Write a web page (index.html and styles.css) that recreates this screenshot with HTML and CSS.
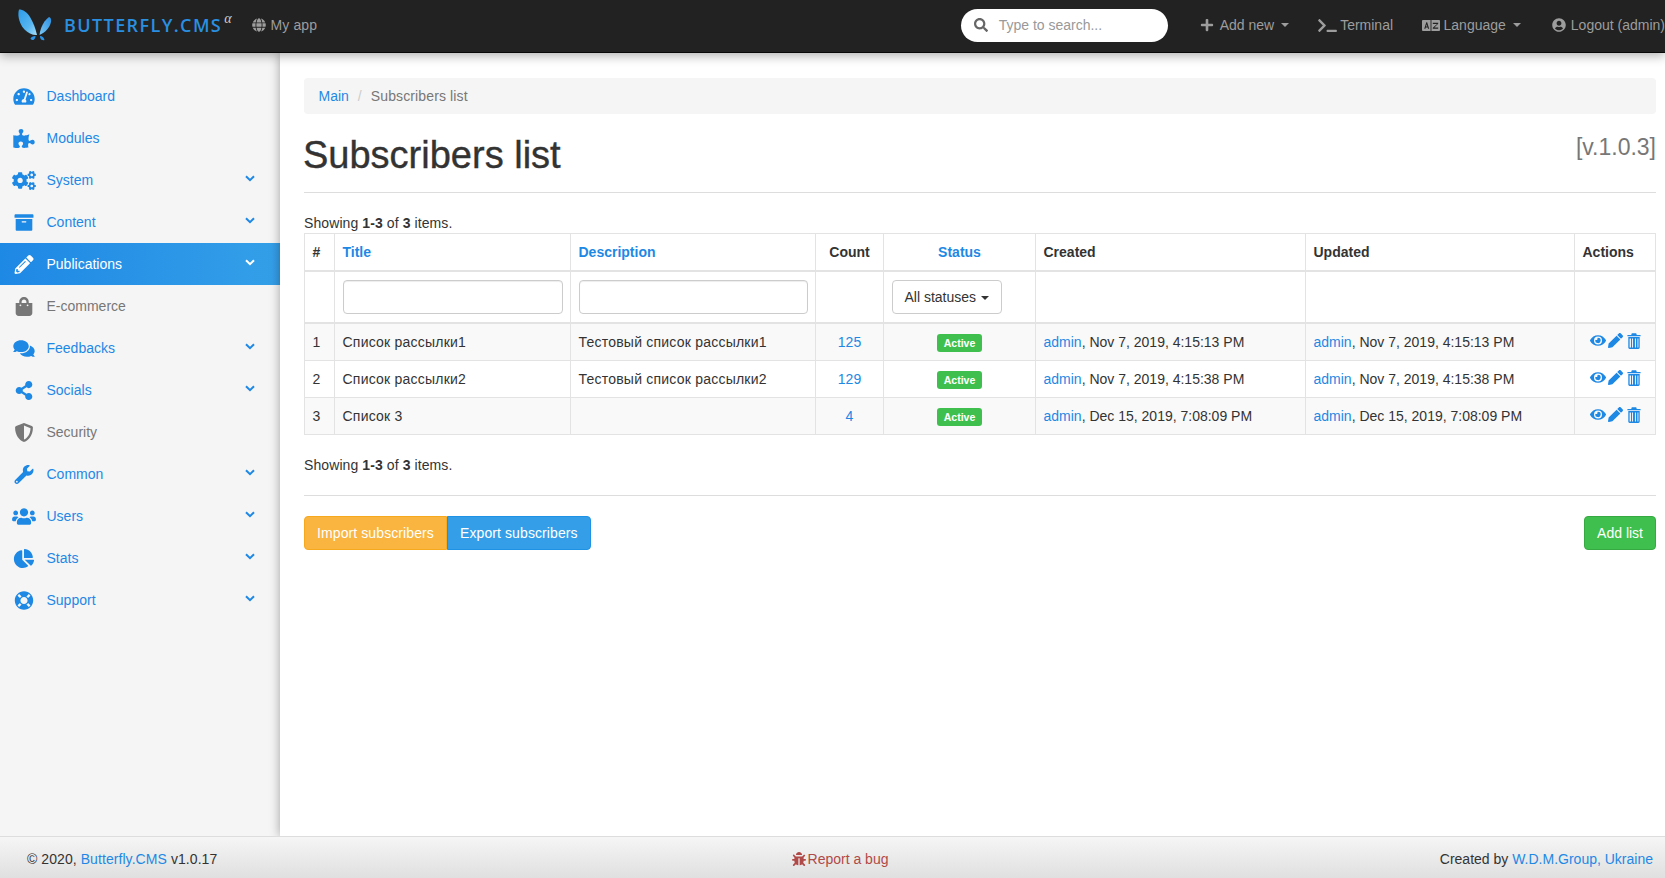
FILE: index.html
```html
<!DOCTYPE html>
<html lang="en">
<head>
<meta charset="utf-8">
<title>Subscribers list</title>
<link rel="stylesheet" href="styles.css">
</head>
<body>
<svg class="sprite" aria-hidden="true">
  <defs>
    <linearGradient id="wingL" x1="0" y1="0" x2="1" y2="1"><stop offset="0" stop-color="#2d9be8"/><stop offset=".6" stop-color="#55b5f0"/><stop offset="1" stop-color="#a5dcf8"/></linearGradient>
    <linearGradient id="wingR" x1="1" y1="0" x2="0" y2="1"><stop offset="0" stop-color="#2a8fe0"/><stop offset="1" stop-color="#7cc8f4"/></linearGradient>
  </defs>
  <symbol id="i-search" viewBox="0 0 512 512"><path d="M505 442.7L405.3 343c-4.5-4.5-10.6-7-17-7H372c27.6-35.3 44-79.7 44-128C416 93.1 322.9 0 208 0S0 93.1 0 208s93.1 208 208 208c48.3 0 92.7-16.4 128-44v16.3c0 6.4 2.5 12.5 7 17l99.7 99.7c9.4 9.4 24.6 9.4 33.9 0l28.3-28.3c9.4-9.4 9.4-24.6.1-34zM208 336c-70.7 0-128-57.2-128-128 0-70.7 57.2-128 128-128 70.7 0 128 57.2 128 128 0 70.7-57.2 128-128 128z"/></symbol>
  <symbol id="i-plus" viewBox="0 0 448 512"><path d="M416 208H272V64c0-17.67-14.33-32-32-32h-32c-17.67 0-32 14.33-32 32v144H32c-17.67 0-32 14.33-32 32v32c0 17.67 14.33 32 32 32h144v144c0 17.67 14.33 32 32 32h32c17.67 0 32-14.33 32-32V304h144c17.67 0 32-14.33 32-32v-32c0-17.67-14.33-32-32-32z"/></symbol>
  <symbol id="i-pen-alt" viewBox="0 0 512 512"><path d="M497.9 142.1l-46.1 46.1c-4.7 4.7-12.3 4.7-17 0l-111-111c-4.7-4.7-4.7-12.3 0-17l46.1-46.1c18.7-18.7 49.1-18.7 67.9 0l60.1 60.1c18.8 18.7 18.8 49.1 0 67.9zM284.2 99.8L21.6 362.4.4 483.9c-2.9 16.4 11.4 30.6 27.8 27.8l121.5-21.3 262.6-262.6c4.7-4.7 4.7-12.3 0-17l-111-111c-4.8-4.7-12.4-4.7-17.1 0zM124.1 339.9c-5.5-5.5-5.5-14.3 0-19.8l154-154c5.5-5.5 14.3-5.5 19.8 0s5.5 14.3 0 19.8l-154 154c-5.5 5.5-14.3 5.5-19.8 0zM88 424h48v36.3l-64.5 11.3-31.1-31.1L51.7 376H88v48z"/></symbol>
  <symbol id="i-pen" viewBox="0 0 512 512"><path d="M497.9 142.1l-46.1 46.1c-4.7 4.7-12.3 4.7-17 0l-111-111c-4.7-4.7-4.7-12.3 0-17l46.1-46.1c18.7-18.7 49.1-18.7 67.9 0l60.1 60.1c18.8 18.7 18.8 49.1 0 67.9zM284.2 99.8L21.6 362.4.4 483.9c-2.9 16.4 11.4 30.6 27.8 27.8l121.5-21.3 262.6-262.6c4.7-4.7 4.7-12.3 0-17l-111-111c-4.8-4.7-12.4-4.7-17.1 0z"/></symbol>
  <symbol id="i-bag" viewBox="0 0 448 512"><path d="M352 160v-32C352 57.42 294.579 0 224 0 153.42 0 96 57.42 96 128v32H0v272c0 44.183 35.817 80 80 80h288c44.183 0 80-35.817 80-80V160h-96zm-192-32c0-35.29 28.71-64 64-64s64 28.71 64 64v32H160v-32zm160 120c-13.255 0-24-10.745-24-24s10.745-24 24-24 24 10.745 24 24-10.745 24-24 24zm-192 0c-13.255 0-24-10.745-24-24s10.745-24 24-24 24 10.745 24 24-10.745 24-24 24z"/></symbol>
  <symbol id="i-share" viewBox="0 0 448 512"><path d="M352 320c-22.608 0-43.387 7.819-59.79 20.895l-102.486-64.054a96.551 96.551 0 0 0 0-41.683l102.486-64.054C308.613 184.181 329.392 192 352 192c53.019 0 96-42.981 96-96S405.019 0 352 0s-96 42.981-96 96c0 7.158.79 14.13 2.276 20.841L155.79 180.895C139.387 167.819 118.608 160 96 160c-53.019 0-96 42.981-96 96s42.981 96 96 96c22.608 0 43.387-7.819 59.79-20.895l102.486 64.054A96.301 96.301 0 0 0 256 416c0 53.019 42.981 96 96 96s96-42.981 96-96-42.981-96-96-96z"/></symbol>
  <symbol id="i-wrench" viewBox="0 0 512 512"><path d="M507.73 109.1c-2.24-9.03-13.54-12.09-20.12-5.51l-74.36 74.36-67.88-11.31-11.31-67.88 74.36-74.36c6.62-6.62 3.43-17.9-5.66-20.16-47.38-11.74-99.55.91-136.58 37.93-39.64 39.64-50.55 97.1-34.05 147.2L18.74 402.76c-24.99 24.99-24.99 65.51 0 90.5 24.99 24.99 65.51 24.99 90.5 0l213.21-213.21c50.12 16.71 107.47 5.68 147.37-34.22 37.07-37.07 49.7-89.32 37.91-136.73zM64 472c-13.25 0-24-10.75-24-24 0-13.26 10.75-24 24-24s24 10.74 24 24c0 13.25-10.75 24-24 24z"/></symbol>
  <symbol id="i-users" viewBox="0 0 640 512"><path d="M96 224c35.3 0 64-28.7 64-64s-28.7-64-64-64-64 28.7-64 64 28.7 64 64 64zm448 0c35.3 0 64-28.7 64-64s-28.7-64-64-64-64 28.7-64 64 28.7 64 64 64zm32 32h-64c-17.6 0-33.5 7.1-45.1 18.6 40.3 22.1 68.9 62 75.1 109.4h66c17.7 0 32-14.3 32-32v-32c0-35.3-28.7-64-64-64zm-256 0c61.9 0 112-50.1 112-112S381.9 32 320 32 208 82.1 208 144s50.1 112 112 112zm76.8 32h-8.3c-20.8 10-43.9 16-68.5 16s-47.6-6-68.5-16h-8.3C179.6 288 128 339.6 128 403.2V432c0 26.5 21.5 48 48 48h288c26.5 0 48-21.5 48-48v-28.8c0-63.6-51.6-115.2-115.2-115.2zm-223.7-13.4C161.5 263.1 145.6 256 128 256H64c-35.3 0-64 28.7-64 64v32c0 17.7 14.3 32 32 32h65.9c6.3-47.4 34.9-87.3 75.2-109.4z"/></symbol>
  <symbol id="i-pie" viewBox="0 0 544 512"><path d="M527.79 288H290.5l158.03 158.03c6.04 6.04 15.98 6.53 22.19.68 38.7-36.46 65.32-85.61 73.13-140.86 1.34-9.46-6.51-17.85-16.06-17.85zm-15.83-64.8C503.72 103.74 408.26 8.28 288.8.04 279.68-.59 272 7.1 272 16.24V240h223.77c9.14 0 16.82-7.68 16.19-16.8zM224 288V50.71c0-9.55-8.39-17.4-17.84-16.06C86.99 51.49-4.1 155.6.14 280.37 4.5 408.51 114.83 513.59 243.03 511.98c50.4-.63 96.97-16.87 135.26-44.03 7.9-5.6 8.42-17.23 1.57-24.08L224 288z"/></symbol>
  <symbol id="i-shield" viewBox="0 0 512 512"><path d="M466.5 83.7l-192-80a48.15 48.15 0 0 0-36.9 0l-192 80C27.7 91.1 16 108.6 16 128c0 198.5 114.5 335.7 221.5 380.3 11.8 4.9 25.1 4.9 36.9 0C360.1 472.6 496 349.3 496 128c0-19.4-11.7-36.9-29.5-44.3zM256.1 446.3l-.1-381 175.9 73.3c-3.3 151.4-82.1 261.1-175.8 307.7z"/></symbol>
  <symbol id="i-ring" viewBox="0 0 512 512"><path d="M256 8C119 8 8 119 8 256s111 248 248 248 248-111 248-248S393 8 256 8zm173.696 119.559l-63.399 63.399c-10.987-18.559-26.67-34.252-45.255-45.255l63.399-63.399a218.396 218.396 0 0 1 45.255 45.255zM256 352c-53.019 0-96-42.981-96-96s42.981-96 96-96 96 42.981 96 96-42.981 96-96 96zM127.559 82.304l63.399 63.399c-18.559 10.987-34.252 26.67-45.255 45.255l-63.399-63.399a218.372 218.372 0 0 1 45.255-45.255zM82.304 384.441l63.399-63.399c10.987 18.559 26.67 34.252 45.255 45.255l-63.399 63.399a218.396 218.396 0 0 1-45.255-45.255zm302.137 45.255l-63.399-63.399c18.559-10.987 34.252-26.67 45.255-45.255l63.399 63.399a218.403 218.403 0 0 1-45.255 45.255z"/></symbol>
  <symbol id="i-comments" viewBox="0 0 576 512"><path d="M416 192c0-88.4-93.1-160-208-160S0 103.6 0 192c0 34.3 14.1 65.9 38 92-13.4 30.2-35.5 54.2-35.8 54.5-2.2 2.3-2.8 5.7-1.5 8.7S4.8 352 8 352c36.6 0 66.9-12.3 88.7-25 32.2 15.7 70.3 25 111.3 25 114.9 0 208-71.6 208-160zm122 220c23.9-26 38-57.7 38-92 0-66.9-53.5-124.2-129.3-148.1.9 6.6 1.3 13.3 1.3 20.1 0 105.9-107.7 192-240 192-10.8 0-21.3-.8-31.7-1.9C207.8 439.6 281.8 480 368 480c41 0 79.1-9.2 111.3-25 21.8 12.7 52.1 25 88.7 25 3.2 0 6.1-1.9 7.3-4.8 1.3-2.9.7-6.3-1.5-8.7-.3-.3-22.4-24.2-35.8-54.5z"/></symbol>
  <symbol id="i-puzzle" viewBox="0 0 576 512"><path d="M519.442 288.651c-41.519 0-59.5 31.593-82.058 31.593C377.409 320.244 432 144 432 144s-196.288 80-196.288-3.297c0-35.827 36.288-46.25 36.288-85.985C272 19.216 243.885 0 210.539 0c-34.654 0-66.366 18.891-66.366 56.346 0 41.364 31.711 59.277 31.711 81.75C175.885 207.719 0 166.758 0 166.758v333.237s178.635 41.047 178.635-28.662c0-22.473-40-40.107-40-81.471 0-37.456 29.25-56.346 63.577-56.346 33.673 0 61.788 19.216 61.788 54.717 0 39.735-36.288 50.158-36.288 85.985 0 60.803 129.675 25.73 181.23 25.73 0 0-34.725-120.101 25.827-120.101 35.962 0 46.423 36.152 86.308 36.152C556.712 416 576 387.99 576 354.443c0-34.199-18.962-65.792-56.558-65.792z"/></symbol>
  <symbol id="i-archive" viewBox="0 0 512 512"><path d="M32 448c0 17.7 14.3 32 32 32h384c17.7 0 32-14.3 32-32V160H32v288zm160-212c0-6.6 5.4-12 12-12h104c6.6 0 12 5.4 12 12v8c0 6.6-5.4 12-12 12H204c-6.6 0-12-5.4-12-12v-8zM480 32H32C14.3 32 0 46.3 0 64v48c0 8.8 7.2 16 16 16h480c8.8 0 16-7.2 16-16V64c0-17.7-14.3-32-32-32z"/></symbol>
  <symbol id="i-gauge" viewBox="0 0 576 512"><path d="M288 32C128.94 32 0 160.94 0 320c0 52.8 14.25 102.26 39.06 144.8 5.61 9.62 16.3 15.2 27.44 15.2h443c11.14 0 21.83-5.58 27.44-15.2C561.75 422.26 576 372.8 576 320c0-159.06-128.94-288-288-288zm0 64c14.71 0 26.58 10.13 30.32 23.65-1.11 2.26-2.64 4.23-3.45 6.67l-9.22 27.67c-5.13 3.49-10.97 6.01-17.64 6.01-17.67 0-32-14.33-32-32S270.33 96 288 96zM96 384c-17.67 0-32-14.33-32-32s14.33-32 32-32 32 14.33 32 32-14.33 32-32 32zm48-160c-17.67 0-32-14.33-32-32s14.33-32 32-32 32 14.33 32 32-14.33 32-32 32zm246.77-72.41l-61.33 184C343.13 347.33 352 364.54 352 384c0 11.72-3.38 22.55-8.88 32H232.88c-5.5-9.45-8.88-20.28-8.88-32 0-33.94 26.5-61.43 59.9-63.59l61.34-184.01c4.17-12.56 17.73-19.45 30.36-15.17 12.57 4.19 19.35 17.79 15.17 30.36zm14.66 57.2l15.52-46.55c3.47-1.29 7.13-2.23 11.05-2.23 17.67 0 32 14.33 32 32s-14.33 32-32 32c-11.38-.01-20.89-6.28-26.57-15.22zM480 384c-17.67 0-32-14.33-32-32s14.33-32 32-32 32 14.33 32 32-14.33 32-32 32z"/></symbol>
  <symbol id="i-cogs" viewBox="0 0 640 512"><path d="M512.1 191l-8.2 14.3c-3 5.3-9.4 7.5-15.1 5.4-11.8-4.4-22.6-10.7-32.1-18.6-4.6-3.8-5.8-10.5-2.8-15.7l8.2-14.3c-6.9-8-12.3-17.3-15.9-27.4h-16.5c-6 0-11.2-4.3-12.2-10.3-2-12-2.1-24.6 0-37.1 1-6 6.2-10.4 12.2-10.4h16.5c3.6-10.1 9-19.4 15.9-27.4l-8.2-14.3c-3-5.2-1.9-11.9 2.8-15.7 9.5-7.9 20.4-14.2 32.1-18.6 5.7-2.1 12.1.1 15.1 5.4l8.2 14.3c10.5-1.9 21.2-1.9 31.7 0L552 6.3c3-5.3 9.4-7.5 15.1-5.4 11.8 4.4 22.6 10.7 32.1 18.6 4.6 3.8 5.8 10.5 2.8 15.7l-8.2 14.3c6.9 8 12.3 17.3 15.9 27.4h16.5c6 0 11.2 4.3 12.2 10.3 2 12 2.1 24.6 0 37.1-1 6-6.2 10.4-12.2 10.4h-16.5c-3.6 10.1-9 19.4-15.9 27.4l8.2 14.3c3 5.2 1.9 11.9-2.8 15.7-9.5 7.9-20.4 14.2-32.1 18.6-5.7 2.1-12.1-.1-15.1-5.4l-8.2-14.3c-10.4 1.9-21.2 1.9-31.7 0zm-10.5-58.8c38.5 29.6 82.4-14.3 52.8-52.8-38.5-29.7-82.4 14.3-52.8 52.8zM386.3 286.1l33.7 16.8c10.1 5.8 14.5 18.1 10.5 29.1-8.9 24.2-26.4 46.4-42.6 65.8-7.4 8.9-20.2 11.1-30.3 5.3l-29.1-16.8c-16 13.7-34.6 24.6-54.9 31.7v33.6c0 11.6-8.3 21.6-19.7 23.6-24.6 4.2-50.4 4.4-75.9 0-11.5-2-20-11.9-20-23.6V418c-20.3-7.2-38.9-18-54.9-31.7L74 403c-10 5.8-22.9 3.6-30.3-5.3-16.2-19.4-33.3-41.6-42.2-65.7-4-10.9.4-23.2 10.5-29.1l33.3-16.8c-3.9-20.9-3.9-42.4 0-63.4L12 205.8c-10.1-5.8-14.6-18.1-10.5-29 8.9-24.2 26-46.4 42.2-65.8 7.4-8.9 20.2-11.1 30.3-5.3l29.1 16.8c16-13.7 34.6-24.6 54.9-31.7V57.1c0-11.5 8.2-21.5 19.6-23.5 24.6-4.2 50.5-4.4 76-.1 11.5 2 20 11.9 20 23.6v33.6c20.3 7.2 38.9 18 54.9 31.7l29.1-16.8c10-5.8 22.9-3.6 30.3 5.3 16.2 19.4 33.2 41.6 42.1 65.8 4 10.9.1 23.2-10 29.1l-33.7 16.8c3.9 21 3.9 42.5 0 63.5zm-117.6 21.1c59.2-77-28.7-164.9-105.7-105.7-59.2 77 28.7 164.9 105.7 105.7zm243.4 182.7l-8.2 14.3c-3 5.3-9.4 7.5-15.1 5.4-11.8-4.4-22.6-10.7-32.1-18.6-4.6-3.8-5.8-10.5-2.8-15.7l8.2-14.3c-6.9-8-12.3-17.3-15.9-27.4h-16.5c-6 0-11.2-4.3-12.2-10.3-2-12-2.1-24.6 0-37.1 1-6 6.2-10.4 12.2-10.4h16.5c3.6-10.1 9-19.4 15.9-27.4l-8.2-14.3c-3-5.2-1.9-11.9 2.8-15.7 9.5-7.9 20.4-14.2 32.1-18.6 5.7-2.1 12.1.1 15.1 5.4l8.2 14.3c10.5-1.9 21.2-1.9 31.7 0l8.2-14.3c3-5.3 9.4-7.5 15.1-5.4 11.8 4.4 22.6 10.7 32.1 18.6 4.6 3.8 5.8 10.5 2.8 15.7l-8.2 14.3c6.9 8 12.3 17.3 15.9 27.4h16.5c6 0 11.2 4.3 12.2 10.3 2 12 2.1 24.6 0 37.1-1 6-6.2 10.4-12.2 10.4h-16.5c-3.6 10.1-9 19.4-15.9 27.4l8.2 14.3c3 5.2 1.9 11.9-2.8 15.7-9.5 7.9-20.4 14.2-32.1 18.6-5.7 2.1-12.1-.1-15.1-5.4l-8.2-14.3c-10.4 1.9-21.2 1.9-31.7 0zM501.6 431c38.5 29.6 82.4-14.3 52.8-52.8-38.5-29.6-82.4 14.3-52.8 52.8z"/></symbol>
  <symbol id="i-user" viewBox="0 0 496 512"><path d="M248 8C111 8 0 119 0 256s111 248 248 248 248-111 248-248S385 8 248 8zm0 96c48.6 0 88 39.4 88 88s-39.4 88-88 88-88-39.4-88-88 39.4-88 88-88zm0 344c-58.7 0-111.3-26.6-146.5-68.2 18.8-35.4 55.6-59.8 98.5-59.8 2.4 0 4.8.4 7.1 1.1 13 4.2 26.6 6.9 40.9 6.9 14.3 0 28-2.7 40.9-6.9 2.3-.7 4.7-1.1 7.1-1.1 42.9 0 79.7 24.4 98.5 59.8C359.3 421.4 306.7 448 248 448z"/></symbol>
  <symbol id="i-term" viewBox="0 0 640 512"><path d="M257.981 272.971L63.638 467.314c-9.373 9.373-24.569 9.373-33.941 0L7.029 444.647c-9.357-9.357-9.375-24.522-.04-33.901L161.011 256 6.99 101.255c-9.335-9.379-9.317-24.544.04-33.901l22.667-22.667c9.373-9.373 24.569-9.373 33.941 0L257.981 239.03c9.373 9.372 9.373 24.568 0 33.941zM640 456v-32c0-13.255-10.745-24-24-24H312c-13.255 0-24 10.745-24 24v32c0 13.255 10.745 24 24 24h304c13.255 0 24-10.745 24-24z"/></symbol>
  <symbol id="i-eye" viewBox="0 0 576 512"><path d="M572.52 241.4C518.29 135.59 410.93 64 288 64S57.68 135.64 3.48 241.41a32.35 32.35 0 0 0 0 29.19C57.71 376.41 165.07 448 288 448s230.32-71.64 284.52-177.41a32.35 32.35 0 0 0 0-29.19zM288 400a144 144 0 1 1 144-144 143.93 143.93 0 0 1-144 144zm0-240a95.31 95.31 0 0 0-25.31 3.79 47.85 47.85 0 0 1-66.9 66.9A95.78 95.78 0 1 0 288 160z"/></symbol>
  <symbol id="i-bug" viewBox="0 0 512 512"><path d="M511.988 288.9c-.478 17.43-15.217 31.1-32.653 31.1H424v16c0 21.864-4.882 42.584-13.6 61.145l60.228 60.228c12.496 12.497 12.496 32.758 0 45.255-12.498 12.497-32.759 12.496-45.256 0l-54.736-54.736C345.886 467.965 314.351 480 280 480V236c0-6.627-5.373-12-12-12h-24c-6.627 0-12 5.373-12 12v244c-34.351 0-65.886-12.035-90.636-32.108l-54.736 54.736c-12.498 12.497-32.759 12.496-45.256 0-12.496-12.497-12.496-32.758 0-45.255l60.228-60.228C92.882 378.584 88 357.864 88 336v-16H32.666C15.23 320 .491 306.33.013 288.9-.484 270.816 14.028 256 32 256h56v-58.745l-46.628-46.628c-12.496-12.497-12.496-32.758 0-45.255 12.498-12.497 32.758-12.497 45.256 0L141.255 160h229.489l54.627-54.627c12.498-12.497 32.758-12.497 45.256 0 12.496 12.497 12.496 32.758 0 45.255L424 197.255V256h56c17.972 0 32.484 14.816 31.988 32.9zM257 0c-61.856 0-112 50.144-112 112h224C369 50.144 318.856 0 257 0z"/></symbol>
  <symbol id="i-trash" viewBox="0 0 16 18"><path d="M5.500 0h5l.7 2h4.300v1.500H.5V2h4.300zM1.500 4.500h13v12c0 .8-.7 1.500-1.500 1.500H3c-.8 0-1.500-.7-1.500-1.500zM3 6v10.500h1.500V6zm2.800 0v10.500h1.100V6zm3.300 0v10.500h1.100V6zm2.900 0v10.500h1V6z" fill-rule="evenodd"/></symbol>
  <symbol id="i-globe" viewBox="0 0 496 512"><path d="M336.500 160C322 70.700 287.800 8 248 8s-74 62.700-88.500 152h177zM152 256c0 22.200 1.200 43.500 3.300 64h185.300c2.100-20.500 3.300-41.800 3.300-64s-1.200-43.500-3.300-64H155.300c-2.100 20.500-3.300 41.800-3.300 64zm324.700-96c-28.600-67.900-86.500-120.400-158-141.600 24.400 33.800 41.200 84.700 50 141.600h108zM177.200 18.400C105.800 39.600 47.800 92.100 19.300 160h108c8.700-56.900 25.500-107.800 49.900-141.600zM487.400 192H372.700c2.100 21 3.300 42.500 3.300 64s-1.200 43-3.300 64h114.600c5.500-20.500 8.600-41.800 8.600-64s-3.100-43.500-8.500-64zM120 256c0-21.500 1.200-43 3.300-64H8.600C3.200 212.500 0 233.800 0 256s3.200 43.500 8.600 64h114.600c-2-21-3.200-42.500-3.200-64zm39.500 96c14.500 89.300 48.700 152 88.500 152s74-62.700 88.500-152h-177zm159.300 141.600c71.400-21.200 129.400-73.700 158-141.600h-108c-8.800 56.900-25.600 107.800-50 141.600zM19.300 352c28.600 67.900 86.500 120.400 158 141.600-24.400-33.800-41.200-84.700-50-141.600h-108z"/></symbol>
  <symbol id="i-lang" viewBox="0 0 20 12"><path fill-rule="evenodd" d="M1 0h8.500v12H1a1 1 0 0 1-1-1V1a1 1 0 0 1 1-1zm3.800 2.500L2.500 9.500h1.300l.4-1.300h2.100l.4 1.300H8L5.700 2.500zm.4 2.200l.7 2.400H4.500z"/><path fill-rule="evenodd" d="M10.500 0H19a1 1 0 0 1 1 1v10a1 1 0 0 1-1 1h-8.500zM12 3v1.200h4.800L12 8.500v1h6V8.300h-4.300L18 4V3z"/></symbol>
  <symbol id="i-logo" viewBox="18 9 34 34">
    <path fill="url(#wingL)" d="M19 9.500C23 9.500 27 12 30 17c3 5 5.500 11 7 18-4 .5-9-2-12.500-5.500C20 25 17 16 19 9.500z"/>
    <path fill="url(#wingR)" d="M49 17c1.500.5 2.500 2 2 5-1 5-5 10-11.500 13 .5-5 2.500-10 5-13.500 1.500-2 3-3.500 4.500-4.500z"/>
    <path fill="#2a94e6" d="M35.500 36c-2.500 0-4.500 1-5 2.500.5 1.500 2.500 2 3.500 1s1.500-2 1.500-3.500zM40 36c2 0 4 1.500 4.500 4-1.500.5-3.500 0-4-1.500-.5-1-.5-1.500-.5-2.500z"/>
  </symbol>
  <symbol id="i-chev" viewBox="0 0 10 7"><path d="M1 1.200l4 4 4-4" fill="none" stroke="currentColor" stroke-width="2"/></symbol>
</svg>

<div class="app">
  <header class="navbar">
    <a class="brand" href="#">
      <svg class="logo"><use href="#i-logo"/></svg>
      <span class="brand-name">BUTTERFLY.CMS</span><sup class="brand-alpha">α</sup>
    </a>
    <a class="nav-link my-app" href="#"><svg class="ic ic-14"><use href="#i-globe"/></svg>My app</a>
    <div class="nav-spacer"></div>
    <label class="search">
      <svg class="ic search-ic"><use href="#i-search"/></svg>
      <span class="search-ph">Type to search...</span>
    </label>
    <a class="nav-link add-new" href="#"><svg class="ic ic-14"><use href="#i-plus"/></svg>Add new<i class="caret"></i></a>
    <a class="nav-link terminal" href="#"><svg class="ic ic-term"><use href="#i-term"/></svg>Terminal</a>
    <a class="nav-link language" href="#"><svg class="ic ic-lang"><use href="#i-lang"/></svg>Language<i class="caret"></i></a>
    <a class="nav-link logout" href="#"><svg class="ic ic-14"><use href="#i-user"/></svg>Logout (admin)</a>
  </header>

  <div class="middle">
    <nav class="sidebar">
      <a class="side-item" href="#"><span class="side-ic"><svg><use href="#i-gauge"/></svg></span><span class="side-text">Dashboard</span></a>
      <a class="side-item" href="#"><span class="side-ic"><svg><use href="#i-puzzle"/></svg></span><span class="side-text">Modules</span></a>
      <a class="side-item" href="#"><span class="side-ic"><svg><use href="#i-cogs"/></svg></span><span class="side-text">System</span><svg class="chev"><use href="#i-chev"/></svg></a>
      <a class="side-item" href="#"><span class="side-ic"><svg><use href="#i-archive"/></svg></span><span class="side-text">Content</span><svg class="chev"><use href="#i-chev"/></svg></a>
      <a class="side-item active" href="#"><span class="side-ic"><svg><use href="#i-pen-alt"/></svg></span><span class="side-text">Publications</span><svg class="chev"><use href="#i-chev"/></svg></a>
      <a class="side-item muted" href="#"><span class="side-ic"><svg><use href="#i-bag"/></svg></span><span class="side-text">E-commerce</span></a>
      <a class="side-item" href="#"><span class="side-ic"><svg><use href="#i-comments"/></svg></span><span class="side-text">Feedbacks</span><svg class="chev"><use href="#i-chev"/></svg></a>
      <a class="side-item" href="#"><span class="side-ic"><svg><use href="#i-share"/></svg></span><span class="side-text">Socials</span><svg class="chev"><use href="#i-chev"/></svg></a>
      <a class="side-item muted" href="#"><span class="side-ic"><svg><use href="#i-shield"/></svg></span><span class="side-text">Security</span></a>
      <a class="side-item" href="#"><span class="side-ic"><svg><use href="#i-wrench"/></svg></span><span class="side-text">Common</span><svg class="chev"><use href="#i-chev"/></svg></a>
      <a class="side-item" href="#"><span class="side-ic"><svg><use href="#i-users"/></svg></span><span class="side-text">Users</span><svg class="chev"><use href="#i-chev"/></svg></a>
      <a class="side-item" href="#"><span class="side-ic"><svg><use href="#i-pie"/></svg></span><span class="side-text">Stats</span><svg class="chev"><use href="#i-chev"/></svg></a>
      <a class="side-item" href="#"><span class="side-ic"><svg><use href="#i-ring"/></svg></span><span class="side-text">Support</span><svg class="chev"><use href="#i-chev"/></svg></a>
    </nav>

    <main class="content">
      <ol class="breadcrumb">
        <li><a href="#">Main</a></li>
        <li class="bc-sep">/</li>
        <li class="bc-current">Subscribers list</li>
      </ol>
      <div class="page-header">
        <h1>Subscribers list</h1>
        <span class="version">[v.1.0.3]</span>
      </div>
      <div class="summary">Showing <b>1-3</b> of <b>3</b> items.</div>
      <table class="grid">
        <colgroup>
          <col class="c-num"><col class="c-title"><col class="c-desc"><col class="c-count"><col class="c-status"><col class="c-created"><col class="c-updated"><col class="c-actions">
        </colgroup>
        <thead>
          <tr>
            <th>#</th>
            <th><a href="#">Title</a></th>
            <th><a href="#">Description</a></th>
            <th class="center">Count</th>
            <th class="center"><a href="#">Status</a></th>
            <th>Created</th>
            <th>Updated</th>
            <th>Actions</th>
          </tr>
          <tr class="filters">
            <td></td>
            <td><input class="form-input" type="text"></td>
            <td><input class="form-input" type="text"></td>
            <td></td>
            <td><button class="dd-btn" type="button">All statuses <i class="caret dark"></i></button></td>
            <td></td>
            <td></td>
            <td></td>
          </tr>
        </thead>
        <tbody>
          <tr class="odd">
            <td>1</td><td class="cy">Список рассылки1</td><td class="cy">Тестовый список рассылки1</td>
            <td class="center"><a href="#">125</a></td>
            <td class="center"><span class="label">Active</span></td>
            <td><a href="#">admin</a>, Nov 7, 2019, 4:15:13 PM</td>
            <td><a href="#">admin</a>, Nov 7, 2019, 4:15:13 PM</td>
            <td class="center actions"><a href="#"><svg class="act act-eye"><use href="#i-eye"/></svg></a><a href="#"><svg class="act act-pen"><use href="#i-pen"/></svg></a><a href="#"><svg class="act act-trash"><use href="#i-trash"/></svg></a></td>
          </tr>
          <tr>
            <td>2</td><td class="cy">Список рассылки2</td><td class="cy">Тестовый список рассылки2</td>
            <td class="center"><a href="#">129</a></td>
            <td class="center"><span class="label">Active</span></td>
            <td><a href="#">admin</a>, Nov 7, 2019, 4:15:38 PM</td>
            <td><a href="#">admin</a>, Nov 7, 2019, 4:15:38 PM</td>
            <td class="center actions"><a href="#"><svg class="act act-eye"><use href="#i-eye"/></svg></a><a href="#"><svg class="act act-pen"><use href="#i-pen"/></svg></a><a href="#"><svg class="act act-trash"><use href="#i-trash"/></svg></a></td>
          </tr>
          <tr class="odd">
            <td>3</td><td class="cy">Список 3</td><td></td>
            <td class="center"><a href="#">4</a></td>
            <td class="center"><span class="label">Active</span></td>
            <td><a href="#">admin</a>, Dec 15, 2019, 7:08:09 PM</td>
            <td><a href="#">admin</a>, Dec 15, 2019, 7:08:09 PM</td>
            <td class="center actions"><a href="#"><svg class="act act-eye"><use href="#i-eye"/></svg></a><a href="#"><svg class="act act-pen"><use href="#i-pen"/></svg></a><a href="#"><svg class="act act-trash"><use href="#i-trash"/></svg></a></td>
          </tr>
        </tbody>
      </table>
      <div class="summary summary-bottom">Showing <b>1-3</b> of <b>3</b> items.</div>
      <hr class="rule">
      <div class="toolbar">
        <div class="btn-group">
          <a class="btn btn-warning" href="#">Import subscribers</a>
          <a class="btn btn-info" href="#">Export subscribers</a>
        </div>
        <a class="btn btn-success" href="#">Add list</a>
      </div>
    </main>
  </div>

  <footer class="footer">
    <div class="foot-left">© 2020, <a href="#">Butterfly.CMS</a> v1.0.17</div>
    <div class="foot-center"><a class="bug" href="#"><svg class="bug-ic"><use href="#i-bug"/></svg>Report a bug</a></div>
    <div class="foot-right">Created by <a href="#">W.D.M.Group, Ukraine</a></div>
  </footer>
</div>
</body>
</html>
```

FILE: styles.css
```css
* { box-sizing: border-box; }
html, body { height: 100%; }
body {
  margin: 0;
  font-family: "Liberation Sans", Arial, sans-serif;
  font-size: 14px;
  line-height: 20px;
  color: #333;
  background: #fff;
  overflow: hidden;
}
a { color: #1e88e5; text-decoration: none; }
svg { fill: currentColor; }
.sprite { width: 0; height: 0; display: block; overflow: hidden; }
.app { height: 878px; display: flex; flex-direction: column; }

/* navbar */
.navbar {
  height: 53px;
  flex: none;
  display: flex;
  align-items: center;
  background: #222;
  border-bottom: 1px solid #080808;
  box-shadow: 0 3px 10px rgba(0, 0, 0, .3);
  position: relative;
  z-index: 3;
  white-space: nowrap;
  padding-bottom: 2px;
}
.brand { display: flex; align-items: center; margin-left: 18px; color: #2a8fe0; }
.logo { width: 34px; height: 34px; flex: none; margin-top: 2px; }
.brand-name { font-family: "Open Sans", sans-serif; font-size: 18px; font-weight: 600; letter-spacing: 1.4px; margin-left: 12px; line-height: 24px; }
.brand-alpha { font-family: "Liberation Serif", serif; font-style: italic; font-size: 14px; line-height: 14px; color: #ccc; margin: -12px 0 0 2px; }
.nav-link { display: flex; align-items: center; color: #9d9d9d; }
.nav-link svg { flex: none; }
.ic-14 { width: 14px; height: 14px; margin-right: 5px; }
.my-app { margin-left: 20px; letter-spacing: .1px; }
.nav-spacer { flex: 1; }
.search {
  width: 207px;
  height: 33px;
  flex: none;
  background: #fff;
  border-radius: 17px;
  display: flex;
  align-items: center;
  padding-left: 13px;
  color: #666;
}
.search-ic { width: 14px; height: 14px; margin-right: 11px; }
.search-ph { color: #999; }
.add-new { margin-left: 32px; }
.add-new .ic-14 { margin-right: 6px; }
.terminal { margin-left: 29px; }
.ic-term { width: 19px; height: 15px; margin-right: 3px; }
.language { margin-left: 28.5px; }
.ic-lang { width: 18px; height: 11px; margin-right: 4px; }
.logout { margin-left: 31px; flex: none; }
.caret {
  display: inline-block;
  width: 0;
  height: 0;
  margin-left: 7px;
  border-top: 4px solid currentColor;
  border-left: 4px solid transparent;
  border-right: 4px solid transparent;
}
.caret.dark { margin-left: 1px; vertical-align: middle; }

/* layout */
.middle { flex: 1; display: flex; min-height: 0; }
.sidebar {
  width: 280px;
  flex: none;
  background: #f5f5f5;
  padding-top: 22px;
}
.side-item {
  height: 42px;
  display: flex;
  align-items: center;
  padding-left: 12px;
  color: #1e88e5;
}
.side-ic { width: 24px; height: 20px; margin-right: 10.5px; display: flex; align-items: center; justify-content: center; flex: none; }
.side-ic svg { width: 24px; height: 19px; }
.side-text { flex: 1; }
.chev { width: 10px; height: 7px; flex: none; margin: 0 25px 4px 0; }
.side-item.muted { color: #777; }
.side-item.active { color: #fff; background: linear-gradient(to right, #1e88e5, #349fe8); }

.content {
  flex: 1;
  min-width: 0;
  background: #fff;
  padding: 25px 9px 0 24px;
  box-shadow: 0 0 10px rgba(0, 0, 0, .35);
  position: relative;
  z-index: 1;
}
.breadcrumb {
  list-style: none;
  margin: 0;
  padding: 8px 15px 8px 14.500px;
  height: 36px;
  display: flex;
  gap: 9px;
  background: #f5f5f5;
  border-radius: 4px;
}
.bc-sep { color: #ccc; }
.bc-current { color: #777; letter-spacing: .13px; }
.page-header {
  display: flex;
  justify-content: space-between;
  align-items: flex-start;
  margin: 20px 0;
  padding-bottom: 16px;
  border-bottom: 1px solid #ddd;
}
.page-header h1 { margin: 0 0 0 -1px; padding-top: 1px; font-size: 38px; line-height: 40px; font-weight: 500; color: #333; -webkit-text-stroke: .4px #333; height: 42px; }
.version { font-size: 23px; line-height: 24px; color: #777; margin-top: 1px; }
.summary { height: 20px; letter-spacing: .09px; }
.summary-bottom { margin-top: 20px; }

/* table */
.grid { width: 100%; border-collapse: collapse; table-layout: fixed; }
.c-num { width: 30px; }
.c-title { width: 236px; }
.c-desc { width: 245px; }
.c-count { width: 68px; }
.c-status { width: 152px; }
.c-created { width: 270px; }
.c-updated { width: 269px; }
.grid th, .grid td {
  border: 1px solid #e3e3e3;
  padding: 8px 7.5px;
  text-align: left;
  vertical-align: middle;
  white-space: nowrap;
  overflow: hidden;
}
.grid th { font-weight: 700; border-bottom-width: 2px; }
.grid .center { text-align: center; }
.grid .filters td { border-bottom-width: 2px; }
.grid tbody td { height: 37px; line-height: 20px; }
.cy { letter-spacing: .22px; }
.odd td { background: #f9f9f9; }
.form-input {
  display: block;
  width: 100%;
  height: 34px;
  border: 1px solid #ccc;
  border-radius: 4px;
  background: #fff;
  box-shadow: inset 0 1px 1px rgba(0, 0, 0, .075);
}
.dd-btn {
  display: block;
  height: 34px;
  padding: 6px 12px;
  border: 1px solid #ccc;
  border-radius: 4px;
  background: #fff;
  color: #333;
  font: inherit;
}
.label {
  display: block;
  width: 45px;
  height: 18px;
  margin: 2px auto 0;
  background: #3fbf4d;
  color: #fff;
  font-size: 10.5px;
  font-weight: 700;
  line-height: 18px;
  text-align: center;
  border-radius: 3px;
}
.actions { font-size: 0; }
.actions a { display: inline-block; vertical-align: top; height: 18px; margin-top: 1px; }
.act { display: block; }
.act-eye { width: 16px; height: 15px; margin-right: 2px; }
.act-pen { width: 15px; height: 15px; margin-right: 4px; }
.act-trash { width: 14px; height: 16px; }

.rule { margin: 20px 0; border: 0; border-top: 1px solid #ddd; }
.toolbar { display: flex; justify-content: space-between; }
.btn-group { display: flex; }
.btn {
  display: block;
  height: 34px;
  padding: 6px 12px 6px 12.500px;
  color: #fff;
  border: 1px solid transparent;
  border-radius: 4px;
}
.btn-group .btn { padding: 6px 12px; letter-spacing: .1px; }
.btn-warning { background: #f9b53f; border-color: #f7a91e; border-radius: 4px 0 0 4px; }
.btn-info { background: #349fe8; border-color: #1e92e4; border-radius: 0 4px 4px 0; }
.btn-success { background: #3fbf4d; border-color: #37a943; }

/* footer */
.footer {
  height: 42px;
  flex: none;
  display: grid;
  grid-template-columns: 1fr auto 1fr;
  align-items: center;
  padding: 2px 12px 0 27px;
  background: linear-gradient(to bottom, #f5f5f5, #e0e0e0);
  border-top: 1px solid #ddd;
  position: relative;
  z-index: 2;
  color: #333;
}
.foot-left { letter-spacing: .07px; }
.foot-right { text-align: right; }
.bug { color: #b04a48; display: flex; align-items: center; }
.bug-ic { width: 14px; height: 14px; margin-right: 2px; }
```
